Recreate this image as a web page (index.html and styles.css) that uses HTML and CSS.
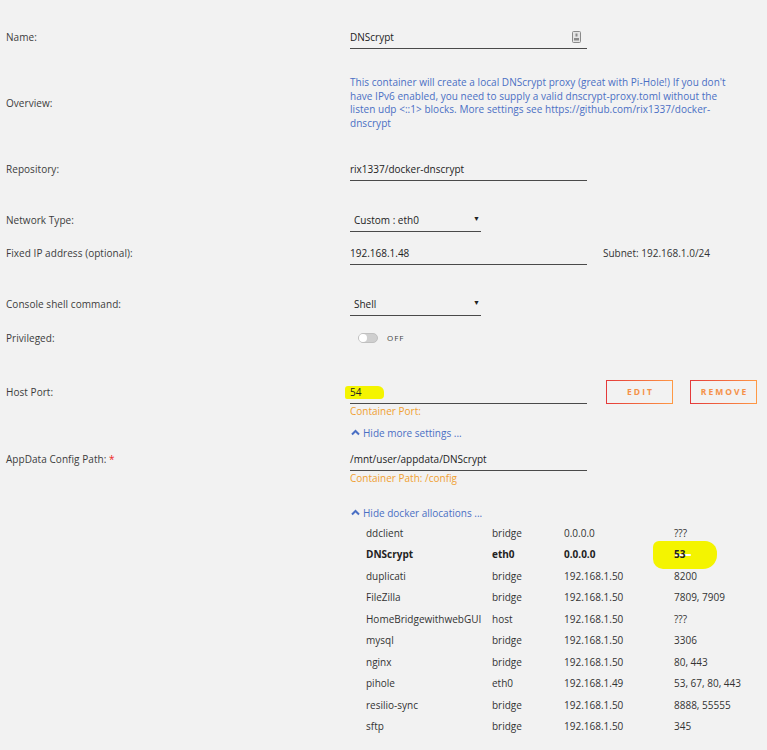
FILE: index.html
```html
<!DOCTYPE html>
<html>
<head>
<meta charset="utf-8">
<link rel="stylesheet" href="styles.css">
</head>
<body>
<div class="form">
  <div class="row r-name">
    <div class="label">Name:</div>
    <div class="content">
      <div class="input w-full with-icon">
        <span>DNScrypt</span>
        <svg class="card-icon" width="9" height="12" viewBox="0 0 9 12"><rect x="0.5" y="0.5" width="8" height="11" rx="1" fill="#e4e4e4" stroke="#8a8a8a"/><rect x="3.5" y="2.5" width="2" height="3" fill="#8a8a8a"/><rect x="2" y="7" width="5" height="2.5" fill="#8a8a8a"/></svg>
      </div>
    </div>
  </div>

  <div class="row r-overview center">
    <div class="label">Overview:</div>
    <div class="content">
      <p class="overview">This container will create a local DNScrypt proxy (great with Pi-Hole!) If you don't have IPv6 enabled, you need to supply a valid dnscrypt-proxy.toml without the listen udp &lt;::1&gt; blocks. More settings see https://github.com/rix1337/docker-dnscrypt</p>
    </div>
  </div>

  <div class="row r-repo">
    <div class="label">Repository:</div>
    <div class="content"><div class="input w-full">rix1337/docker-dnscrypt</div></div>
  </div>

  <div class="row r-net">
    <div class="label">Network Type:</div>
    <div class="content"><div class="input select">Custom : eth0<span class="arrow">▼</span></div></div>
  </div>

  <div class="row r-ip">
    <div class="label">Fixed IP address (optional):</div>
    <div class="content inline">
      <div class="input w-full">192.168.1.48</div>
      <span class="subnet">Subnet: 192.168.1.0/24</span>
    </div>
  </div>

  <div class="row r-shell">
    <div class="label">Console shell command:</div>
    <div class="content"><div class="input select">Shell<span class="arrow">▼</span></div></div>
  </div>

  <div class="row r-priv">
    <div class="label">Privileged:</div>
    <div class="content toggle-wrap">
      <span class="toggle"><span class="knob"></span></span>
      <span class="off">OFF</span>
    </div>
  </div>

  <div class="row r-port">
    <div class="label">Host Port:</div>
    <div class="content">
      <div class="inline">
        <div class="input w-full hl-wrap"><span class="hl hl-54"></span><span class="hl-text">54</span></div>
        <button class="btn btn-edit">EDIT</button>
        <button class="btn">REMOVE</button>
      </div>
      <div class="hint">Container Port:</div>
      <div class="toggle-link"><svg width="9" height="7" viewBox="0 0 9 7"><path d="M1 5.5 L4.5 2 L8 5.5" fill="none" stroke="#4a6fc4" stroke-width="2"/></svg>Hide more settings ...</div>
    </div>
  </div>

  <div class="row r-app">
    <div class="label">AppData Config Path: <span class="req">*</span></div>
    <div class="content">
      <div class="input w-full">/mnt/user/appdata/DNScrypt</div>
      <div class="hint">Container Path: /config</div>
      <div class="toggle-link alloc-link"><svg width="9" height="7" viewBox="0 0 9 7"><path d="M1 5.5 L4.5 2 L8 5.5" fill="none" stroke="#4a6fc4" stroke-width="2"/></svg>Hide docker allocations ...</div>
      <div class="alloc">
        <div class="arow"><span>ddclient</span><span>bridge</span><span>0.0.0.0</span><span>???</span></div>
        <div class="arow bold"><span>DNScrypt</span><span>eth0</span><span>0.0.0.0</span><span class="hl-cell"><span class="hl hl-53"></span><span class="hl-dash"></span><span class="hl-text">53</span></span></div>
        <div class="arow"><span>duplicati</span><span>bridge</span><span>192.168.1.50</span><span>8200</span></div>
        <div class="arow"><span>FileZilla</span><span>bridge</span><span>192.168.1.50</span><span>7809, 7909</span></div>
        <div class="arow"><span>HomeBridgewithwebGUI</span><span>host</span><span>192.168.1.50</span><span>???</span></div>
        <div class="arow"><span>mysql</span><span>bridge</span><span>192.168.1.50</span><span>3306</span></div>
        <div class="arow"><span>nginx</span><span>bridge</span><span>192.168.1.50</span><span>80, 443</span></div>
        <div class="arow"><span>pihole</span><span>eth0</span><span>192.168.1.49</span><span>53, 67, 80, 443</span></div>
        <div class="arow"><span>resilio-sync</span><span>bridge</span><span>192.168.1.50</span><span>8888, 55555</span></div>
        <div class="arow"><span>sftp</span><span>bridge</span><span>192.168.1.50</span><span>345</span></div>
      </div>
    </div>
  </div>
</div>
</body>
</html>
```

FILE: styles.css
```css
html, body {
  margin: 0;
  padding: 0;
  background: #f2f2f2;
}
body {
  font-family: "Open Sans", "Noto Sans", sans-serif;
  font-size: 10px;
  color: #3a3a3a;
  width: 767px;
  height: 750px;
  overflow: hidden;
}
.form {
  display: flex;
  flex-direction: column;
  padding-top: 26px;
}
.row {
  display: grid;
  grid-template-columns: 350px 1fr;
  align-items: start;
}
.row.center { align-items: center; }
.label {
  padding-left: 6px;
  height: 23px;
  line-height: 22px;
  color: #3c3c3c;
  letter-spacing: 0.05px;
}
.row.center .label { height: auto; line-height: 14px; }
.req { color: #e22; }
.input {
  box-sizing: border-box;
  height: 23px;
  line-height: 22px;
  border-bottom: 1px solid #4a4a4a;
  color: #222;
  position: relative;
}
.w-full { width: 237px; }
.with-icon { display: flex; justify-content: space-between; align-items: center; }
.card-icon { margin-right: 6px; margin-top: -1px; }
.select {
  width: 131px;
  padding-left: 4px;
  display: flex;
  justify-content: space-between;
}
.arrow { font-size: 7px; color: #222; padding-right: 1px; margin-top: -1px; }
.inline { display: flex; align-items: flex-start; }
.subnet { margin-left: 16px; line-height: 22px; color: #333; }

.r-overview { margin-top: 27px; }
.overview {
  margin: 0;
  width: 382px;
  color: #4a6fc4;
  line-height: 13.7px;
  letter-spacing: 0.04px;
}
.r-repo { margin-top: 27px; }
.r-net { margin-top: 28px; }
.r-ip { margin-top: 10px; }
.r-shell { margin-top: 28px; }
.r-priv { margin-top: 12px; }
.r-priv .label { height: 20px; line-height: 20px; }
.toggle-wrap { display: flex; align-items: center; height: 20px; padding-left: 8px; }
.toggle {
  width: 20px;
  height: 10px;
  border-radius: 5px;
  background: #cfcfcf;
  border: 1px solid #c0c0c0;
  box-sizing: border-box;
  position: relative;
}
.knob {
  position: absolute;
  left: 0;
  top: 0;
  width: 8px;
  height: 8px;
  border-radius: 50%;
  background: #fff;
}
.off { margin-left: 9px; font-size: 8px; letter-spacing: 1px; color: #444; }

.r-port { margin-top: 33px; }
.btn {
  box-sizing: border-box;
  width: 67px;
  height: 24px;
  margin-left: 17px;
  background: transparent;
  border: 1.5px solid;
  border-image: linear-gradient(90deg, #e4393a, #ff9a45) 1;
  color: #f59148;
  font-family: "Open Sans", sans-serif;
  font-weight: bold;
  font-size: 8.5px;
  letter-spacing: 2px;
  padding: 0 0 0 2px;
  margin-top: -1px;
}
.btn-edit { margin-left: 19px; }
.hint { color: #f0a030; line-height: 15px; height: 15px; }
.toggle-link {
  color: #4a6fc4;
  margin-top: 7px;
  height: 14px;
  line-height: 14px;
  display: flex;
  align-items: center;
  gap: 3px;
  padding-left: 1px;
}
.r-app { margin-top: 8px; }
.alloc-link { margin-top: 20px; }
.alloc { padding-left: 16px; margin-top: 3px; }
.arow {
  display: grid;
  grid-template-columns: 126px 72px 110px auto;
  height: 21.5px;
  line-height: 21.5px;
  color: #333;
}
.arow.bold { font-weight: bold; color: #222; }
.hl-wrap { overflow: visible; }
.hl-cell { position: relative; }
.hl { position: absolute; background: #f4f400; z-index: 0; }
.hl-text { position: relative; z-index: 1; }
.hl-54 {
  left: -5px;
  top: 5px;
  width: 39px;
  height: 13px;
  border-radius: 3px 6px 4px 2px;
}
.hl-53 {
  left: -21px;
  top: -3px;
  width: 64px;
  height: 28px;
  border-radius: 6px 12px 14px 10px;
}
.hl-dash {
  position: absolute;
  z-index: 1;
  left: 1px;
  top: 10px;
  width: 16px;
  height: 1.5px;
  background: #fff;
  border-radius: 1px;
}
```
